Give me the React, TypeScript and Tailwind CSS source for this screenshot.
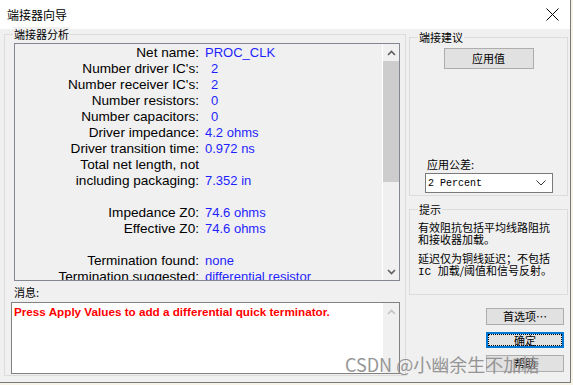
import React from "react";

const CJK = "font-['Noto_Sans_CJK_SC',sans-serif]";

type Row = { label: string; value?: string; num?: boolean };

const rows: Row[] = [
  { label: "Net name:", value: "PROC_CLK" },
  { label: "Number driver IC's:", value: "2", num: true },
  { label: "Number receiver IC's:", value: "2", num: true },
  { label: "Number resistors:", value: "0", num: true },
  { label: "Number capacitors:", value: "0", num: true },
  { label: "Driver impedance:", value: "4.2 ohms" },
  { label: "Driver transition time:", value: "0.972 ns" },
  { label: "Total net length, not" },
  { label: "including packaging:", value: "7.352 in" },
  { label: "" },
  { label: "Impedance Z0:", value: "74.6 ohms" },
  { label: "Effective Z0:", value: "74.6 ohms" },
  { label: "" },
  { label: "Termination found:", value: "none" },
  { label: "Termination suggested:", value: "differential resistor" },
];

function Chevron({ up, color }: { up?: boolean; color: string }) {
  return (
    <svg width="9" height="6" viewBox="0 0 9 6" className="block">
      <path
        d={up ? "M1 5 L4.5 1.5 L8 5" : "M1 1 L4.5 4.5 L8 1"}
        fill="none"
        stroke={color}
        strokeWidth="1.6"
      />
    </svg>
  );
}

function Group({
  title,
  className,
  children,
}: {
  title: string;
  className: string;
  children?: React.ReactNode;
}) {
  return (
    <div className={`relative border border-[#dcdcdc] ${className}`}>
      <span
        className={`absolute left-[8px] -top-[8px] bg-[#f0f0f0] px-[1px] text-[11px] leading-[14px] text-black ${CJK}`}
      >
        {title}
      </span>
      {children}
    </div>
  );
}

function Button({ label, focused }: { label: string; focused?: boolean }) {
  return (
    <div
      className={`ml-[77px] flex w-[78px] items-center justify-center bg-[#e1e1e1] text-[11px] text-black ${CJK} ${
        focused ? "mt-[7px] h-[16px] border-2 border-[#0078d7]" : "h-[17px] border border-[#adadad]"
      }`}
    >
      {focused ? (
        <div className="flex h-full w-full items-center justify-center border border-dotted border-black">
          {label}
        </div>
      ) : (
        label
      )}
    </div>
  );
}

export default function App() {
  return (
    <div className="relative h-[385px] w-[573px] overflow-hidden bg-[#f7f3e6] font-['Liberation_Sans',Arial,sans-serif]">
      <div className="flex h-[383px] w-[571px] flex-col border-b border-r border-[#7a7a7a]">
        {/* title bar */}
        <div className="flex h-[29px] shrink-0 items-center bg-white">
          <span className={`pl-[7px] text-[12px] text-black ${CJK}`}>端接器向导</span>
          <svg width="13" height="13" viewBox="0 0 13 13" className="ml-auto mr-[11px]">
            <path d="M0.5 0.5 L12.5 12.5 M12.5 0.5 L0.5 12.5" stroke="#000" strokeWidth="1" />
          </svg>
        </div>

        <div className="flex flex-1 bg-[#f0f0f0] pl-[4px] pt-[5px]">
          {/* left column */}
          <Group title="端接器分析" className="flex h-[342px] w-[402px] flex-col">
            <div className="ml-[9px] mt-[8px] flex h-[238px] w-[386px] border border-[#828790] bg-[#f0f0f0]">
              <div className="flex-1 overflow-hidden pt-[1px] text-[13px] leading-[16px]">
                {rows.map((r, i) => (
                  <div key={i} className="flex h-[16px] whitespace-nowrap">
                    <div className="w-[184px] text-right text-[13.6px] text-black">{r.label}</div>
                    {r.value && (
                      <div className={`${r.num ? "pl-[12px]" : "pl-[6px]"} text-[#1f1fff]`}>
                        {r.value}
                      </div>
                    )}
                  </div>
                ))}
              </div>
              <div className="flex w-[17px] flex-col border-l border-white bg-[#f0f0f0]">
                <div className="flex h-[17px] items-center justify-center">
                  <Chevron up color="#606060" />
                </div>
                <div className="h-[121px] bg-[#cdcdcd]" />
                <div className="flex-1" />
                <div className="flex h-[17px] items-center justify-center">
                  <Chevron color="#606060" />
                </div>
              </div>
            </div>
            <div className={`ml-[9px] mt-[4px] text-[11px] leading-[14px] text-black ${CJK}`}>消息:</div>
            <div className="ml-[6px] mt-[3px] flex h-[72px] w-[389px] border border-[#828282] bg-white">
              <div className="flex-1 pl-[2px] pt-[2px] text-[11.7px] font-bold leading-[14px] text-[#ff0000]">
                Press Apply Values to add a differential quick terminator.
              </div>
              <div className="flex w-[16px] flex-col bg-[#f0f0f0]">
                <div className="flex h-[17px] items-center justify-center">
                  <Chevron up color="#c2c2c2" />
                </div>
              </div>
            </div>
          </Group>

          {/* right column */}
          <div className="ml-[3px] flex w-[159px] flex-col">
            <Group title="端接建议" className="mt-[3px] flex h-[159px] flex-col">
              <div
                className={`mt-[10px] flex h-[21px] w-[90px] items-center justify-center self-center border border-[#adadad] bg-[#e1e1e1] text-[11px] text-black ${CJK}`}
              >
                应用值
              </div>
              <div className="flex-1" />
              <div className={`ml-[17px] mb-[2px] text-[11px] leading-[14px] text-black ${CJK}`}>应用公差:</div>
              <div className="mb-[2px] ml-[15px] flex h-[20px] w-[128px] items-center border border-[#7a7a7a] bg-white pl-[2px] pr-[6px]">
                <span className="font-['Liberation_Mono',monospace] text-[10px] text-black">2 Percent</span>
                <svg width="10" height="6" viewBox="0 0 10 6" className="ml-auto">
                  <path d="M0.5 0.5 L5 5 L9.5 0.5" fill="none" stroke="#333" strokeWidth="1" />
                </svg>
              </div>
            </Group>

            <Group title="提示" className="mt-[13px] h-[86px]">
              <div className={`pl-[8px] pt-[11px] text-[11px] leading-[12px] text-black ${CJK}`}>
                <div>有效阻抗包括平均线路阻抗</div>
                <div>和接收器加载。</div>
                <div className="mt-[7px]">延迟仅为铜线延迟；不包括</div>
                <div>
                  <span className="font-['Liberation_Mono',monospace]">IC </span>加载/阈值和信号反射。
                </div>
              </div>
            </Group>

            <div className="mt-[13px]">
              <Button label="首选项…" />
            </div>
            <Button label="确定" focused />
            <div className="mt-[7px]">
              <Button label="帮助" />
            </div>
          </div>
        </div>
      </div>

      {/* watermark */}
      <div
        className={`absolute left-[345px] top-[352px] whitespace-nowrap text-[18px] leading-[24px] text-[#8c8c8c] opacity-90 ${CJK}`}
      >
        CSDN @小幽余生不加糖
      </div>
    </div>
  );
}
